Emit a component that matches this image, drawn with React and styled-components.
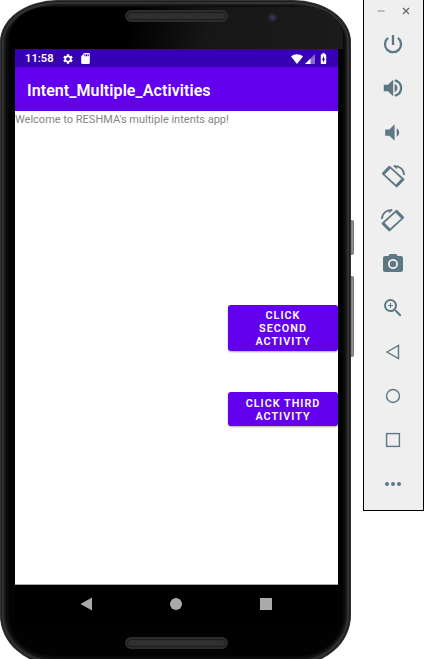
import React from "react";
import styled, { createGlobalStyle } from "styled-components";
import {
  MdSettings, MdSdCard, MdBatteryChargingFull,
  MdVolumeDown, MdCameraAlt, MdZoomIn,
} from "react-icons/md";

const GlobalStyle = createGlobalStyle`
  *, *::before, *::after { box-sizing: border-box; }
  body { margin: 0; background: #fff; font-family: Roboto, sans-serif; overflow: hidden; }
  svg { display: block; flex: none; }
`;

const Desktop = styled.main`
  display: flex;
  align-items: flex-start;
  width: 424px;
  height: 659px;
  overflow: hidden;
`;

const Device = styled.section`
  position: relative;
  width: 351px;
  height: 665px;
  flex: none;
  padding: 5px 3px 3px 2px;
  border-radius: 58px 58px 56px 56px / 42px 42px 50px 50px;
  background: #050505;
  border: 1px solid #333;
  box-shadow: inset 0 0 1px 1px #1a1a1a, inset 0 0 2px 3px #3a3a3a, inset 0 0 3px 6px #141414;
`;

const SideKey = styled.span`
  position: absolute;
  left: 350px;
  top: ${(p) => p.$top}px;
  width: 3px;
  height: ${(p) => p.$height}px;
  background: linear-gradient(90deg, #777, #999);
  border-right: 1px solid #777;
  border-radius: 0 2px 2px 0;
`;

const Face = styled.div`
  display: flex;
  flex-direction: column;
  align-items: center;
  margin: 1px 4px 0 7px;
  height: 649px;
  border-radius: 36px 36px 44px 44px / 30px 30px 40px 40px;
  overflow: hidden;
  background: linear-gradient(105deg, #000 0 36%, #171717 60%, #1b1b1b 100%) 0 0 / 100% 42px no-repeat, #020202;
`;

const TopBezel = styled.div`
  position: relative;
  display: flex;
  justify-content: center;
  width: 323px;
  height: 42px;
  padding-top: 3px;
`;

const Speaker = styled.div`
  width: 103px;
  height: 12px;
  flex: none;
  border: 2px solid #2c2c2c;
  border-radius: 6px;
  background: #303030;
  box-shadow: inset 0 0 1px 1px #1c1c1c;
`;

const Lens = styled.span`
  position: absolute;
  left: 253px;
  top: 6px;
  width: 9px;
  height: 9px;
  border-radius: 50%;
  background: radial-gradient(#3d3b5c, #23222e 60%, #1a1a1a);
`;

const Screen = styled.div`
  display: flex;
  flex-direction: column;
  width: 323px;
  height: 536px;
  flex: none;
  background: #fff;
`;

const StatusBar = styled.header`
  display: flex;
  align-items: center;
  height: 18px;
  padding: 1px 8px 0 10px;
  background: #3700b3;
  color: #fff;
`;

const Clock = styled.span`
  width: 37px;
  font-size: 11.2px;
  font-weight: 600;
`;

const StatusGroup = styled.div`
  display: flex;
  align-items: center;
  gap: ${(p) => p.$gap}px;
  margin-left: ${(p) => (p.$end ? "auto" : "0")};
`;

const AppBar = styled.h1`
  display: flex;
  align-items: center;
  height: 44px;
  margin: 0;
  padding: 3px 12px 0;
  background: #6200ee;
  color: #fff;
  font-size: 16px;
  font-weight: 600;
  letter-spacing: 0.08px;
  white-space: nowrap;
`;

const Content = styled.div`
  display: flex;
  flex: 1;
  flex-direction: column;
  align-items: flex-end;
  border-bottom: 1px solid #aaa;
`;

const Welcome = styled.p`
  align-self: flex-start;
  height: 194px;
  margin: 0;
  color: #858585;
  font-size: 11px;
  line-height: 17px;
  white-space: nowrap;
`;

const ActionButton = styled.button`
  width: 110px;
  height: ${(p) => p.$height}px;
  flex: none;
  margin: 0 0 41px;
  padding: 1px 12px 0;
  border: 0;
  border-radius: 3px;
  background: #6200ee;
  box-shadow: 0 1px 2px #0005;
  color: #fff;
  font: 600 10.8px/13px Roboto, sans-serif;
  letter-spacing: 1px;
  text-transform: uppercase;
`;

const NavBar = styled.nav`
  display: flex;
  flex: none;
  align-items: center;
  justify-content: space-between;
  width: 323px;
  height: 38px;
  padding: 0 66px 0 65px;
  background: #000;
`;

const BottomBezel = styled.div`
  display: flex;
  justify-content: center;
  padding-top: 14px;
  width: 323px;
  height: 32px;
`;

const Tools = styled.aside`
  display: flex;
  flex-direction: column;
  align-items: center;
  width: 61px;
  height: 511px;
  margin-left: 12px;
  border: 1px solid #000;
  border-top: 0;
  background: #efefef;
`;

const WindowControls = styled.div`
  display: flex;
  align-items: center;
  justify-content: flex-end;
  gap: 17px;
  width: 100%;
  height: 22px;
  padding-right: 13px;
`;

const ToolButton = styled.button`
  display: grid;
  place-items: center;
  width: 59px;
  height: 44px;
  flex: none;
  padding: 0 2px 0 0;
  border: 0;
  background: none;
  color: #5d7885;
`;

const PowerIcon = () => (
  <svg width="24" height="24" viewBox="0 0 24 24" fill="none" stroke="currentColor" strokeWidth="2.3">
    <path d="M12 3 V13 M7.1 5.9 A8 8 0 1 0 16.9 5.9" />
  </svg>
);

const VolumeUpIcon = () => (
  <svg width="24" height="24" viewBox="0 0 24 24" fill="currentColor">
    <path d="M2.8 8.8 V15.2 H7 L12.2 20.2 V3.8 L7 8.8 Z" />
    <path d="M13.6 7.8 C15.4 8.7 16.5 10.2 16.5 12 C16.5 13.8 15.4 15.3 13.6 16.2 Z" />
    <path d="M13.8 4.3 C17.6 5.3 20.1 8.3 20.1 12 C20.1 15.7 17.6 18.7 13.8 19.7" fill="none" stroke="currentColor" strokeWidth="2.3" />
  </svg>
);

const RotateIcon = ({ mirrored }) => (
  <svg width="26" height="26" viewBox="0 0 26 26" fill="none" stroke="currentColor">
    <g transform={mirrored ? "translate(26 0) scale(-1 1)" : undefined}>
      <path d="M9.4 3.7 L23.6 16.5 L16.7 23.5 L2.7 10.6 Z" strokeWidth="1.7" strokeLinejoin="round" />
      <path d="M3.6 10.4 L9.5 4.7 M16.8 22.4 L22.7 16.6" strokeWidth="2.8" />
      <path d="M13.8 3.1 C19.2 2.5 23.8 6.4 24.2 12" strokeWidth="1.7" />
      <path d="M14 2.8 L17 5.6" strokeWidth="1.4" />
    </g>
  </svg>
);

const BackIcon = () => (
  <svg width="22" height="22" viewBox="0 0 22 22" fill="none" stroke="currentColor" strokeWidth="1.4">
    <path d="M5 11 L16.5 4.5 V17.5 Z" />
  </svg>
);

const HomeIcon = () => (
  <svg width="22" height="22" viewBox="0 0 22 22" fill="none" stroke="currentColor" strokeWidth="1.4">
    <circle cx="11" cy="11" r="6.5" />
  </svg>
);

const OverviewIcon = () => (
  <svg width="22" height="22" viewBox="0 0 22 22" fill="none" stroke="currentColor" strokeWidth="1.4">
    <rect x="4.6" y="4.6" width="12.8" height="12.8" />
  </svg>
);

const MoreIcon = () => (
  <svg width="22" height="22" viewBox="0 0 22 22" fill="currentColor">
    <circle cx="5" cy="11" r="2" /><circle cx="11" cy="11" r="2" /><circle cx="17" cy="11" r="2" />
  </svg>
);

const WifiIcon = () => (
  <svg width="12" height="10" viewBox="0 0 12 10">
    <path d="M0 2.6 C3.4 -0.6 8.6 -0.6 12 2.6 L6 10 Z" fill="#fff" />
  </svg>
);

const SignalIcon = () => (
  <svg width="10" height="10" viewBox="0 0 10 10">
    <path d="M0 10 L10 0 V10 Z" fill="#fff" opacity=".4" />
    <path d="M0 10 L5.5 4.5 V10 Z" fill="#fff" />
  </svg>
);

const tools = [
  ["Power", <PowerIcon />],
  ["Volume up", <VolumeUpIcon />],
  ["Volume down", <MdVolumeDown size={25} />],
  ["Rotate left", <RotateIcon />],
  ["Rotate right", <RotateIcon mirrored />],
  ["Take screenshot", <MdCameraAlt size={24} />],
  ["Zoom", <MdZoomIn size={24} />],
  ["Back", <BackIcon />],
  ["Home", <HomeIcon />],
  ["Overview", <OverviewIcon />],
  ["More", <MoreIcon />],
];

export default function App() {
  return (
    <>
      <GlobalStyle />
      <Desktop>
        <Device>
          <SideKey $top={219} $height={35} />
          <SideKey $top={275} $height={81} />
          <Face>
            <TopBezel><Speaker /><Lens /></TopBezel>
            <Screen>
              <StatusBar>
                <Clock>11:58</Clock>
                <StatusGroup $gap={5}><MdSettings size={12} /><MdSdCard size={13} /></StatusGroup>
                <StatusGroup $gap={2} $end>
                  <WifiIcon /><SignalIcon /><MdBatteryChargingFull size={13} />
                </StatusGroup>
              </StatusBar>
              <AppBar>Intent_Multiple_Activities</AppBar>
              <Content>
                <Welcome>Welcome to RESHMA's multiple intents app!</Welcome>
                <ActionButton $height={46}>Click Second Activity</ActionButton>
                <ActionButton $height={34}>Click Third Activity</ActionButton>
              </Content>
            </Screen>
            <NavBar>
              <svg width="12" height="14" viewBox="0 0 12 14"><path d="M0.5 7 L12 0.5 V13.5 Z" fill="#aaa" /></svg>
              <svg width="12" height="12" viewBox="0 0 12 12"><circle cx="6" cy="6" r="6" fill="#aaa" /></svg>
              <svg width="12" height="12" viewBox="0 0 12 12"><rect width="12" height="12" fill="#aaa" /></svg>
            </NavBar>
            <BottomBezel><Speaker /></BottomBezel>
          </Face>
        </Device>
        <Tools>
          <WindowControls>
            <svg width="8" height="8" viewBox="0 0 8 8"><path d="M0.5 4 H7.5" stroke="#888" /></svg>
            <svg width="8" height="8" viewBox="0 0 8 8"><path d="M1 1 L7 7 M7 1 L1 7" stroke="#666" strokeWidth="1.2" /></svg>
          </WindowControls>
          {tools.map(([label, icon]) => <ToolButton key={label} aria-label={label}>{icon}</ToolButton>)}
        </Tools>
      </Desktop>
    </>
  );
}
